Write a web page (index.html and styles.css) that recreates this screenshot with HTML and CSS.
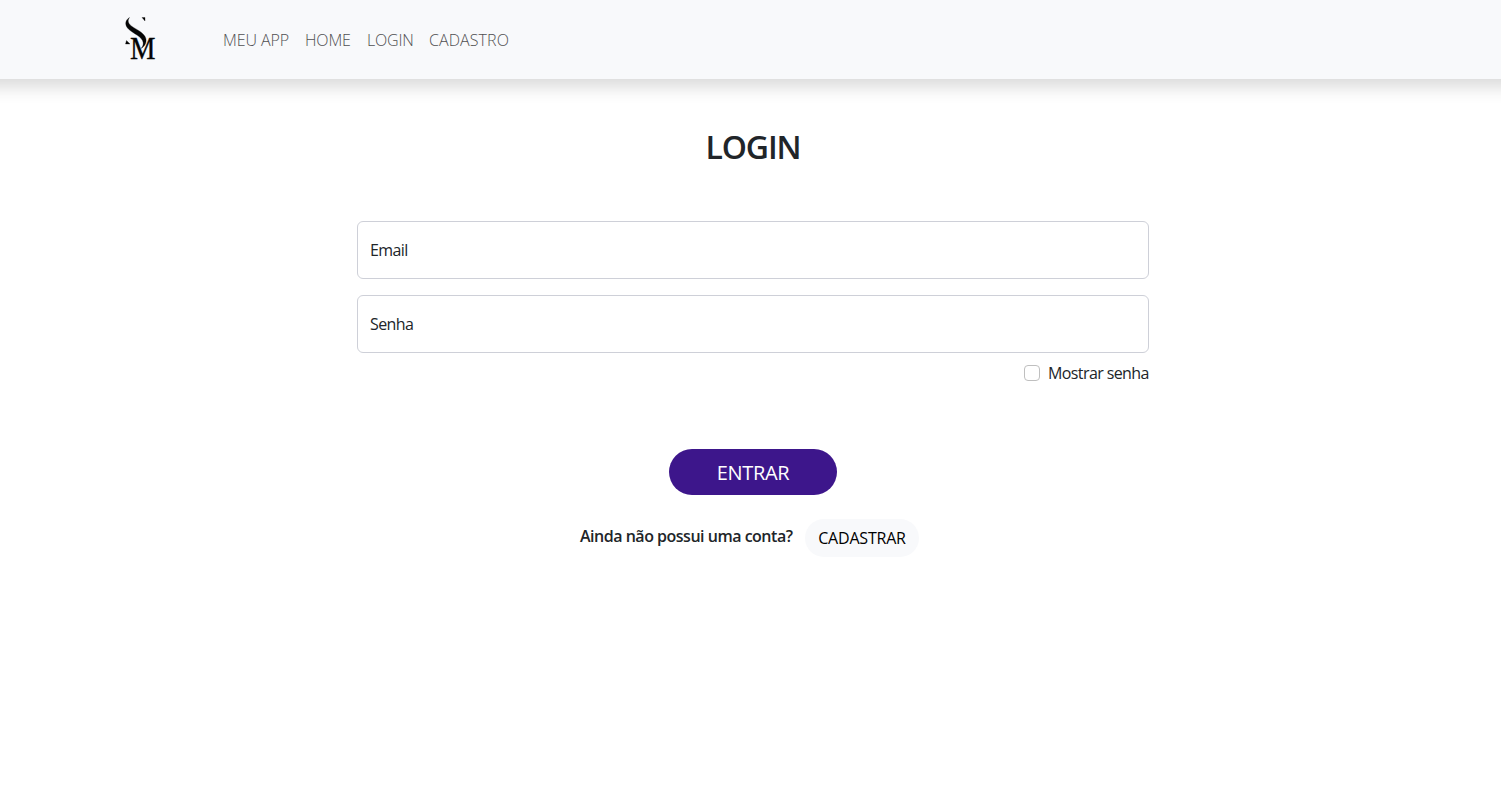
FILE: index.html
```html
<!DOCTYPE html>
<html lang="pt-BR">
<head>
<meta charset="utf-8">
<title>Login</title>
<link rel="stylesheet" href="styles.css">
</head>
<body>
<header class="navbar">
  <a class="brand" aria-label="SM">
    <svg class="logo" width="36" height="56" viewBox="0 -4 36 56">
      <path d="M6.500 1.500C2.500 4 1.500 8 4.500 12c3.500 4.500 12 7 15 12.500 1.500 3 .5 6-1.500 8 5.500-3 7-9.500 2.500-14C16 13.500 8.500 11.500 6 7.500 4.800 5.500 5 3.500 6.500 1.500Z"/>
      <path d="M19 1.500h3v3.500ZM3.500 24.500 7 28H2.500Z"/>
      <text class="logo-m" x="7" y="42.700" textLength="25.500" lengthAdjust="spacingAndGlyphs">M</text>
    </svg>
  </a>
  <nav class="links">
    <a class="link link-app">MEU APP</a>
    <a class="link link-home">HOME</a>
    <a class="link link-login">LOGIN</a>
    <a class="link link-register">CADASTRO</a>
  </nav>
</header>
<main class="page">
  <h1 class="title">LOGIN</h1>
  <form class="form">
    <label class="field"><span class="email">Email</span></label>
    <label class="field"><span class="password">Senha</span></label>
    <label class="show"><input class="check" type="checkbox"><span class="show-text">Mostrar senha</span></label>
    <button class="submit" type="button"><span>ENTRAR</span></button>
    <div class="signup">
      <span class="question">Ainda não possui uma conta?</span>
      <button class="register" type="button"><span>CADASTRAR</span></button>
    </div>
  </form>
</main>
</body>
</html>
```
FILE: styles.css
```css
* { box-sizing: border-box; }
body {
  margin: 0;
  background: #fff;
  color: #212529;
  font: 400 16px/24px "Open Sans", "Noto Sans", sans-serif;
}
.navbar {
  display: flex;
  align-items: center;
  height: 79px;
  padding-left: 123px;
  background: #f8f9fb;
  box-shadow: 0 -12px 16px 20px rgba(0, 0, 0, .15);
}
.brand { display: flex; width: 100px; }
.logo { fill: #050505; stroke: #050505; stroke-width: .3; }
.logo-m { font: 32px "Liberation Serif", serif; }
.links { display: flex; gap: 16px; font-weight: 300; }
.link { color: #505052; white-space: nowrap; }
.link-app { width: 66px; letter-spacing: -.1px; }
.link-home { width: 46px; letter-spacing: -.15px; }
.link-login { width: 46px; letter-spacing: -.2px; }
.link-register { width: 80px; letter-spacing: .08px; }
.page { width: 792px; margin-left: 357px; padding-top: 48px; }
.title {
  margin: 0 0 55px;
  text-align: center;
  font-size: 32px;
  line-height: 39px;
  font-weight: 600;
  letter-spacing: -1.1px;
}
.form { display: flex; flex-direction: column; }
.field {
  display: flex;
  align-items: center;
  height: 58px;
  margin-bottom: 16px;
  padding: 0 12px;
  border: 1px solid #ced0d8;
  border-radius: 6px;
}
.email, .password { letter-spacing: -.6px; }
.show {
  display: flex;
  align-self: flex-end;
  align-items: center;
  gap: 8px;
  margin-top: -8px;
}
.show-text { width: 101px; white-space: nowrap; letter-spacing: -.6px; }
.check {
  appearance: none;
  width: 16px;
  height: 16px;
  margin: 0;
  border: 1px solid #bfbfbf;
  border-radius: 4px;
}
.submit {
  align-self: center;
  width: 168px;
  height: 46px;
  margin-top: 64px;
  padding: 2px 0 0;
  border: 0;
  border-radius: 23px;
  background: #3d168b;
  color: #fff;
  font: 400 20px/30px "Open Sans", "Noto Sans", sans-serif;
  letter-spacing: -.3px;
}
.signup {
  display: flex;
  gap: 12px;
  margin: 24px 0 0 223px;
}
.question {
  width: 213px;
  padding-top: 5px;
  font-weight: 600;
  letter-spacing: -.49px;
  white-space: nowrap;
}
.register {
  width: 114px;
  height: 38px;
  padding: 0;
  border: 0;
  border-radius: 19px;
  background: #f8f9fb;
  color: #000;
  font: 400 16px/24px "Open Sans", "Noto Sans", sans-serif;
  letter-spacing: -.2px;
}
```
